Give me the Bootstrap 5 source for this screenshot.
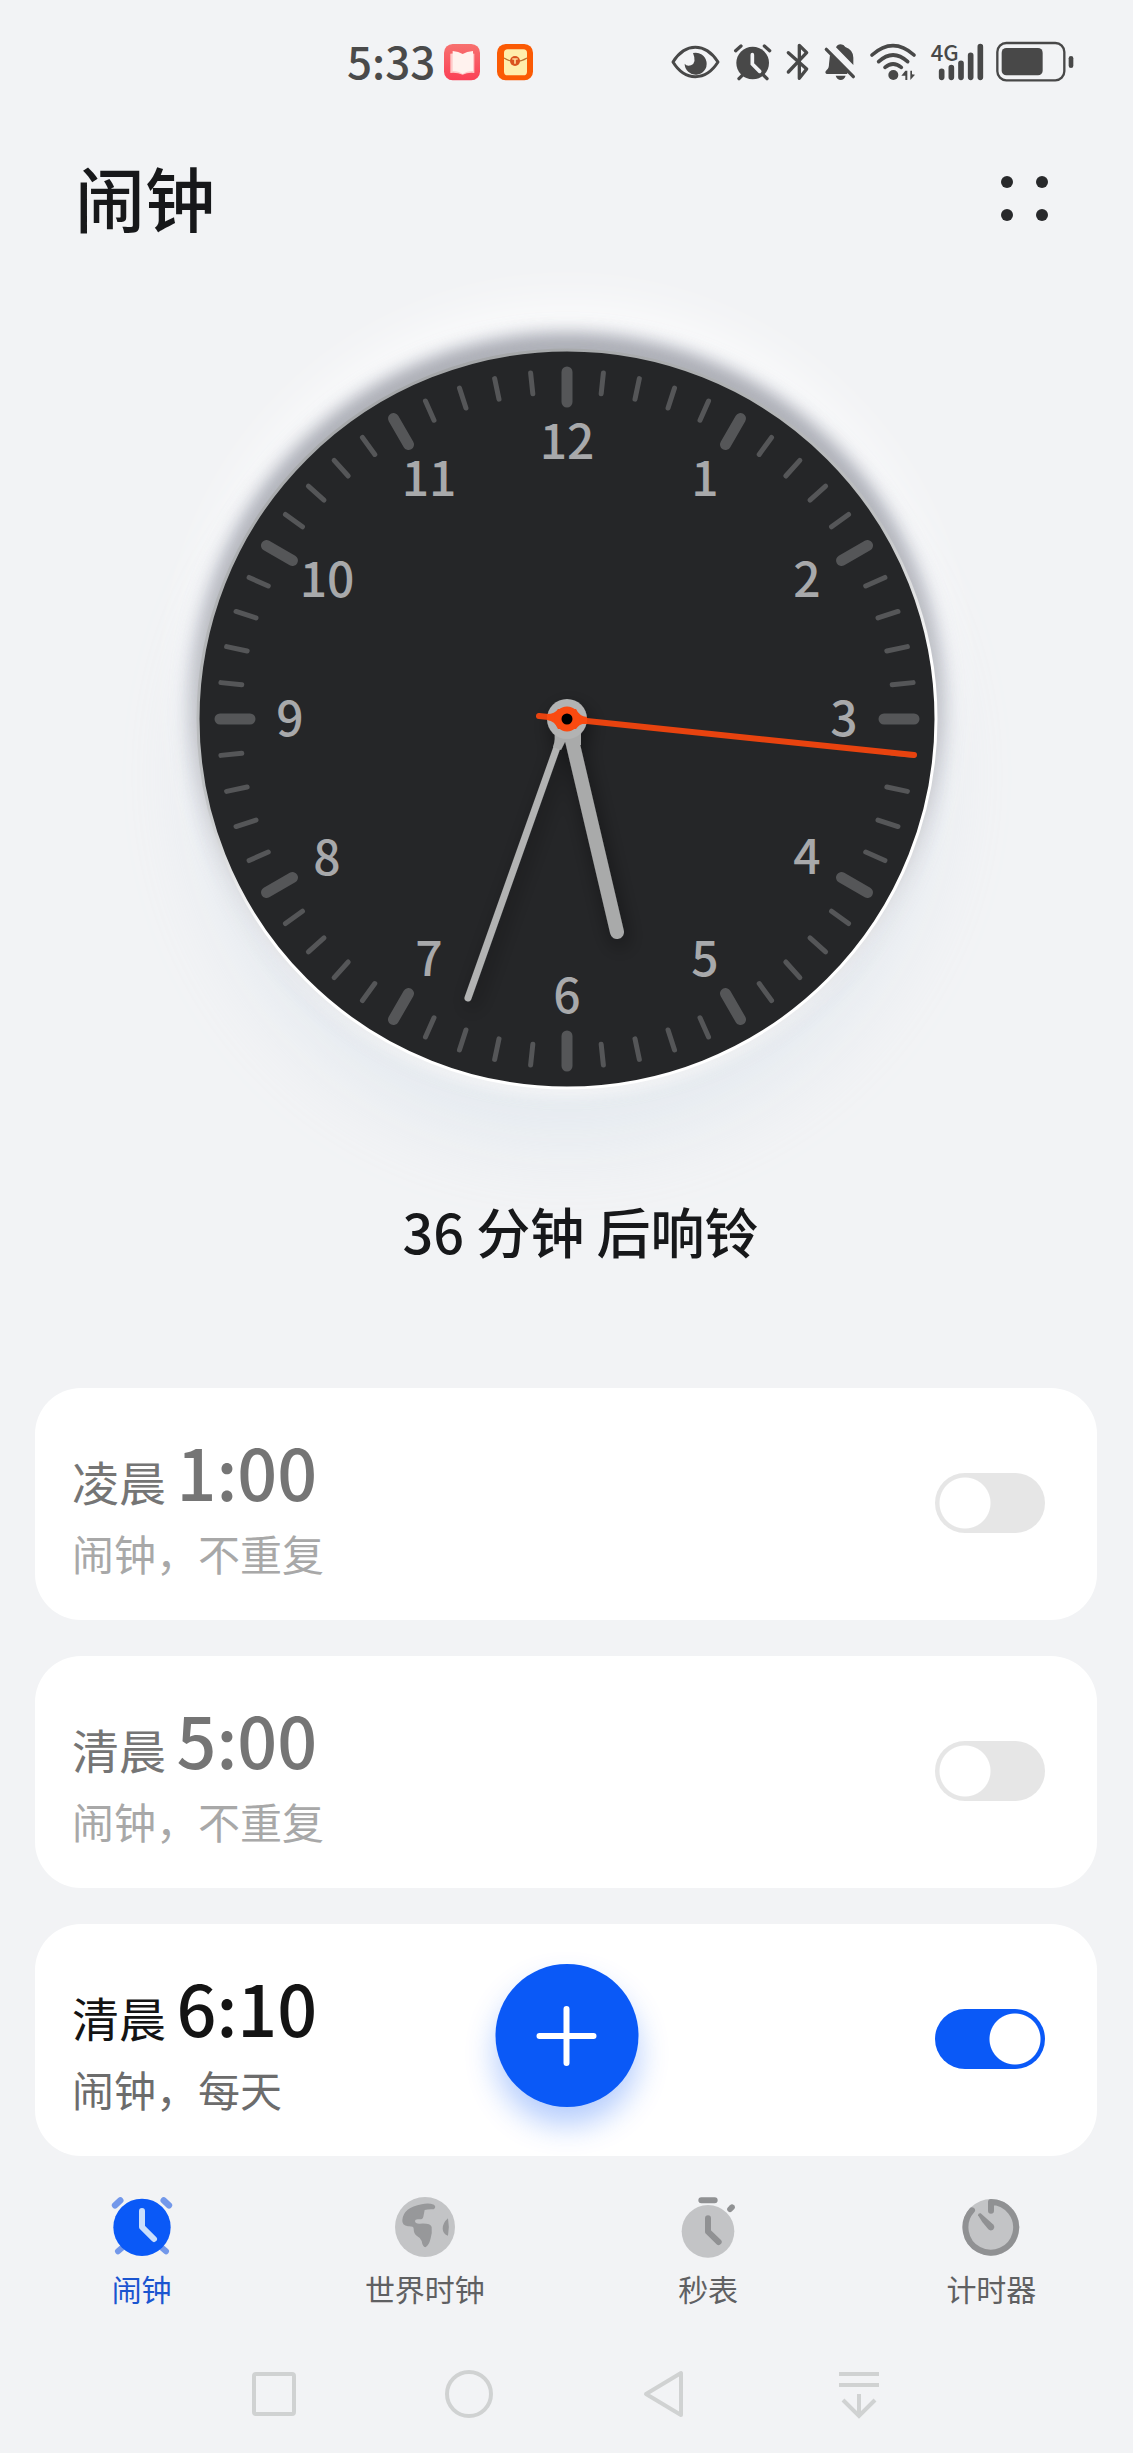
<!DOCTYPE html>
<html lang="zh-CN">
<head>
<meta charset="utf-8">
<meta name="viewport" content="width=device-width, initial-scale=1">
<title>闹钟</title>
<link href="https://cdn.jsdelivr.net/npm/bootstrap@5.3.0/dist/css/bootstrap.min.css" rel="stylesheet">
<style>
  :root { --accent: #0a59f7; --page: #f2f3f5; }
  body { background: var(--page); color: #17181a; font-family: "Noto Sans CJK SC", sans-serif; }
  svg { display: block; flex: none; overflow: visible; }
  .status-bar { padding: 42px 58px 0 347px; height: 82px; color: #484848; }
  .status-time { width: 88px; margin-bottom: 4px; font-size: 44px; line-height: 36px; font-weight: 500; color: #4a4a4a; }
  .gap-start { margin-left: 12px; }
  .page-head { margin-top: 75px; padding: 0 82px 0 75px; }
  .page-title { font-size: 70px; line-height: 80px; font-weight: 500; }
  .dial { width: 734px; height: 734px; margin-top: 115px; border-radius: 50%;
    box-shadow: 0 -12px 16px 6px rgba(92, 94, 104, .4), 0 6px 16px 4px #fff,
      0 -8px 18px 14px rgba(150, 156, 180, .3),
      0 -40px 60px rgba(255, 255, 255, .95), 0 56px 76px rgba(200, 216, 230, .3); }
  .dial-numbers { font-size: 48px; fill: #a8a9ab; text-anchor: middle; font-weight: 500; }
  .next-ring { margin-top: 115px; padding-left: 28px; font-size: 54px; line-height: 60px; font-weight: 500; }
  .alarm-list { margin-top: 127px; padding: 0 36px 0 35px; gap: 36px; }
  .alarm-card { height: 232px; border: 0; border-radius: 46px; padding: 43px 52px 0 37px; --bs-card-bg: #fff; }
  .alarm-time { font-size: 70px; line-height: 80px; font-weight: 500; color: #141414; }
  .alarm-time span { font-size: 47px; font-weight: 400; white-space: pre; }
  .alarm-note { margin-top: 7px; font-size: 42px; line-height: 50px; color: #6c6c6c; font-weight: 400; }
  .alarm-off .alarm-time { color: #757575; }
  .alarm-off .alarm-note { color: #a8a8a8; }
  .form-switch.alarm-switch { padding: 0; margin: 42px 0 0; min-height: 60px; }
  .form-switch .form-check-input.alarm-toggle { float: none; display: block; width: 110px; height: 60px; margin: 0; border: 0; border-radius: 30px;
    background-color: #e6e6e6; background-size: 60px 60px; background-position: left center;
    background-image: radial-gradient(circle, #fff 25px, transparent 26px); }
  .form-switch .form-check-input.alarm-toggle:checked { background-color: var(--accent); background-position: right center; }
  .add-btn { width: 143px; height: 143px; bottom: 49px; background: var(--accent); box-shadow: 0 18px 30px rgba(10, 89, 247, .3); }
  .add-btn:hover { background: var(--accent); }
  .tabs { margin-top: 41px; }
  .tabs .nav-link { padding: 0; color: #5f6062; font-size: 30px; line-height: 36px; gap: 13px; }
  .tabs .nav-link.active { color: #1b55d0; }
  .system-keys { margin: 63px auto 34px; width: 57%; }
  .system-keys button { width: 60px; height: 50px; }
</style>
<script src="https://cdn.jsdelivr.net/npm/bootstrap@5.3.0/dist/js/bootstrap.bundle.min.js"></script>
</head>
<body>
<header class="status-bar d-flex align-items-center">
  <span class="status-time">5:33</span>
  <svg class="ms-2" width="38" height="40" viewBox="372 68 114 120">
    <defs><linearGradient id="book" x2="0" y2="1"><stop stop-color="#f7716f"/><stop offset="1" stop-color="#fb4056"/></linearGradient></defs>
    <rect x="375" y="74" width="108" height="109" rx="26" fill="url(#book)"/>
    <path d="M394 103q20-1 37 5q17-6 35-5v58q-20-2-35 5q-17-7-37-5z" fill="#ffc9c9"/>
    <path d="M401 95q18 1 30 9q12-8 31-9v60q-19 0-31 9q-12-9-30-9z" fill="#fff2ee"/>
  </svg>
  <svg class="ms-3" width="36" height="40" viewBox="531 68 108 120">
    <rect x="531" y="74" width="108" height="109" rx="26" fill="#fb5a04"/>
    <rect x="552" y="90" width="69" height="78" rx="11" fill="#ffedac"/>
    <path d="M552 116q34 22 69 0" fill="none" stroke="#b87032" stroke-width="4"/>
    <circle cx="585" cy="125" r="15" fill="#d9531e"/><path d="M577 119h16M585 119v14" stroke="#ffd99a" stroke-width="5"/>
  </svg>
  <div class="d-flex align-items-center ms-auto">
    <svg width="54" height="40" viewBox="60 66 162 120" fill="currentColor">
      <path d="M66 126Q94 82 133 82T201 126Q173 170 133 170T66 126z" fill="none" stroke="currentColor" stroke-width="9" stroke-linejoin="round"/>
      <path d="M126 99a33 33 0 1 1-25 32q6 9 19 5q18-8 6-37z"/>
    </svg>
    <svg class="ms-2" width="40" height="40" viewBox="248 66 120 120" fill="none" stroke="currentColor" stroke-width="10" stroke-linecap="round">
      <circle cx="307" cy="129" r="49" fill="currentColor" stroke="none"/>
      <path d="M256 92l16-14M342 78l16 14M266 176l12-12M350 176l-12-12"/>
      <path d="M306 104v28l22 22" stroke="#f2f3f5" stroke-width="11"/>
    </svg>
    <svg class="gap-start" width="26" height="40" viewBox="404 66 78 120" fill="none" stroke="currentColor" stroke-width="10" stroke-linejoin="round" stroke-linecap="round">
      <path d="M414 98l55 49l-22 28V76l22 22l-55 58"/>
    </svg>
    <svg class="gap-start" width="34" height="40" viewBox="516 66 102 120" fill="currentColor">
      <path d="M555 82q4-9 14-9t14 8q24 9 24 32v22zM537 104l51 48q5 5 0 10H527q-8-4 0-12q7-4 7-18zM554 167h30q-5 13-15 13t-15-13z"/>
      <path d="M526 88l81 82" stroke="currentColor" stroke-width="10" stroke-linecap="round"/>
    </svg>
    <svg class="gap-start" width="48" height="40" viewBox="654 66 144 120" fill="none" stroke="currentColor" stroke-width="11" stroke-linecap="round">
      <path d="M663 105q63-56 126 0M683 125q43-40 87 0M702 142q24-20 49 0"/>
      <circle cx="727" cy="165" r="15" fill="currentColor" stroke="none"/>
      <path d="M763 152v28h6v-28zM751 167l12-15v15zM778 152v28l14-16-9-1v-11z" fill="currentColor" stroke="none"/>
    </svg>
    <svg class="gap-start" width="58" height="40" viewBox="832 66 174 120" fill="none" stroke="currentColor" stroke-width="17" stroke-linecap="round">
      <path d="M870 154v18M899 143v29M928 130v42M957 106v66M986 80v92"/>
      <text x="837" y="124" font-size="66" font-weight="500" fill="currentColor" stroke="none">4G</text>
    </svg>
    <svg class="ms-2" width="80" height="40" viewBox="1036 66 240 120">
      <rect x="1043" y="69" width="201" height="112" rx="27" fill="none" stroke="currentColor" stroke-width="7"/>
      <rect x="1056" y="84" width="123" height="82" rx="14" fill="currentColor"/>
      <rect x="1257" y="108" width="14" height="36" rx="7" fill="currentColor"/>
    </svg>
  </div>
</header>

<main>
  <div class="page-head d-flex justify-content-between align-items-center">
    <h1 class="page-title m-0">闹钟</h1>
    <button class="btn border-0 p-0" type="button" aria-label="更多">
      <svg width="54" height="54" fill="#28292b"><circle cx="10" cy="12" r="6"/><circle cx="45" cy="12" r="6"/><circle cx="10" cy="45" r="6"/><circle cx="45" cy="45" r="6"/></svg>
    </button>
  </div>

  <div class="dial mx-auto">
    <svg width="100%" height="100%" viewBox="-367 -367 734 734">
      <defs>
        <linearGradient id="rim" x1=".3" y1="0" x2=".7" y2="1"><stop stop-color="#a3a5a7"/><stop offset=".42" stop-color="#bfc1c3"/><stop offset=".6" stop-color="#fff"/><stop offset="1" stop-color="#fff"/></linearGradient>
        <filter id="soft" x="-100%" y="-50%" width="300%" height="200%"><feDropShadow dx="3" dy="8" stdDeviation="10" flood-opacity=".45"/></filter>
      </defs>
      <circle r="369" fill="#252628" stroke="url(#rim)" stroke-width="3"/>
      <g id="ticks" stroke="#555658" stroke-linecap="round"></g>
      <g id="numbers" class="dial-numbers"></g>
      <g filter="url(#soft)" stroke-linecap="round">
        <path d="M0 0L-99 279" stroke="#b2b3b3" stroke-width="7"/>
        <path d="M0 0L50 213" stroke="#a9aaaa" stroke-width="14"/>
        <path d="M-13 12Q-11 20-14 28L-6 31L-2 23L4 26L14 26L14 10z" fill="#a9aaaa"/>
        <circle r="20" fill="#b2b3b3"/>
      </g>
      <path d="M-28-3L347 36" stroke="#e8430f" stroke-width="6" stroke-linecap="round"/>
      <path d="M-20-5Q-12-5-9-10L9-10Q12-3 20-2L20 5Q13 4 9 10L-9 10Q-12 2-20 1z" fill="#fa4a10"/>
      <circle r="9" fill="#000" stroke="#fa4a10" stroke-width="7"/>
    </svg>
  </div>
  <p class="next-ring text-center mb-0">36 分钟 后响铃</p>

  <section class="alarm-list d-flex flex-column position-relative" aria-label="闹钟列表">
    <article class="card alarm-card alarm-off flex-row justify-content-between">
      <label for="alarm1"><div class="alarm-time"><span>凌晨 </span>1:00</div><div class="alarm-note">闹钟，不重复</div></label>
      <div class="form-check form-switch alarm-switch"><input class="form-check-input alarm-toggle" type="checkbox" role="switch" id="alarm1"></div>
    </article>
    <article class="card alarm-card alarm-off flex-row justify-content-between">
      <label for="alarm2"><div class="alarm-time"><span>清晨 </span>5:00</div><div class="alarm-note">闹钟，不重复</div></label>
      <div class="form-check form-switch alarm-switch"><input class="form-check-input alarm-toggle" type="checkbox" role="switch" id="alarm2"></div>
    </article>
    <article class="card alarm-card flex-row justify-content-between">
      <label for="alarm3"><div class="alarm-time"><span>清晨 </span>6:10</div><div class="alarm-note">闹钟，每天</div></label>
      <div class="form-check form-switch alarm-switch"><input class="form-check-input alarm-toggle" type="checkbox" role="switch" id="alarm3" checked></div>
    </article>
    <button class="add-btn btn border-0 rounded-circle p-0 position-absolute start-50 translate-middle-x d-flex align-items-center justify-content-center" type="button" aria-label="添加闹钟">
      <svg width="60" height="60" stroke="#fff" stroke-width="6" stroke-linecap="round"><path d="M3 30H57M30 3V57"/></svg>
    </button>
  </section>
</main>

<nav class="tabs nav nav-justified" aria-label="主导航">
  <a class="nav-link active d-flex flex-column align-items-center" href="#" aria-current="page">
    <svg width="60" height="60" viewBox="153 80 180 180" stroke-linecap="round" fill="none">
      <path d="M162 105l16-15M308 90l16 15" stroke="#7398ea" stroke-width="19"/><path d="M171 243l14-12M301 231l14 12" stroke="#7398ea" stroke-width="18"/>
      <circle cx="243" cy="171" r="86" fill="#0a59f7"/><path d="M243 122v48l36 36" stroke="#c9defc" stroke-width="18" stroke-linejoin="round"/>
    </svg>闹钟</a>
  <a class="nav-link d-flex flex-column align-items-center" href="#">
    <svg width="60" height="60" viewBox="1002 80 180 180">
      <circle cx="1092" cy="170" r="90" fill="#c3c4c6"/>
      <path d="M1082 102q20-5 37 1q8 7-1 14q-17-1-27 2l-4 20q-2 9-12 8q-13-2-13 6q1 8 15 7q32-2 35 10q2 16-3 34q-5 22-16 27q-8-1-11-19q-4-10-14-15q-10-6-10-22q0-8-17-7q-19-3-17-19q3-37 58-47zM1161 144q-16 14-16 31q1 17 16 21q5-26 0-52z" fill="#97989a"/>
    </svg>世界时钟</a>
  <a class="nav-link d-flex flex-column align-items-center" href="#">
    <svg width="60" height="60" viewBox="171 80 180 180" stroke-linecap="round" fill="none" stroke="#909193">
      <circle cx="261" cy="183" r="79" fill="#c3c4c6" stroke="none"/><path d="M241 90h40M261 144v40l32 31" stroke-width="18" stroke-linejoin="round"/><path d="M327 117l6-6" stroke-width="17"/>
    </svg>秒表</a>
  <a class="nav-link d-flex flex-column align-items-center" href="#">
    <svg width="60" height="60" viewBox="1020 80 180 180" stroke-linecap="round" fill="none" stroke="#909193" stroke-width="18">
      <circle cx="1110" cy="171" r="85" fill="#c3c4c6" stroke="none"/><path d="M1110 121V95A76 76 0 1 1 1053 120" stroke-linejoin="round"/><path d="M1071 135q0-7 8-6l37 33q8 9 0 16q-8 5-14-1q-20-21-31-42z" fill="#909193" stroke="none"/>
    </svg>计时器</a>
</nav>

<footer class="system-keys d-flex justify-content-between">
  <button class="btn border-0 p-0 d-flex align-items-center justify-content-center" type="button" aria-label="最近任务"><svg width="44" height="44" fill="none" stroke="#d0d2d2" stroke-width="4"><rect x="2" y="2" width="40" height="40" rx="2"/></svg></button>
  <button class="btn border-0 p-0 d-flex align-items-center justify-content-center" type="button" aria-label="主屏幕"><svg width="48" height="48" fill="none" stroke="#d0d2d2" stroke-width="4"><circle cx="24" cy="24" r="22"/></svg></button>
  <button class="btn border-0 p-0 d-flex align-items-center justify-content-center" type="button" aria-label="返回"><svg width="42" height="48" fill="none" stroke="#d0d2d2" stroke-width="4" stroke-linejoin="round"><path d="M38 3V45L3 24z"/></svg></button>
  <button class="btn border-0 p-0 d-flex align-items-center justify-content-center" type="button" aria-label="通知栏"><svg width="42" height="48" fill="none" stroke="#d0d2d2" stroke-width="4"><path d="M1 4H41M1 15H41M21 24V45M5 30L21 46L37 30"/></svg></button>
</footer>

<script>
  // Sixty minute marks and the twelve hour numbers of the dial
  const ns = "http://www.w3.org/2000/svg";
  const ticks = document.getElementById("ticks"), numbers = document.getElementById("numbers");
  for (let i = 1; i <= 60; i++) {
    const major = i % 5 === 0, tick = document.createElementNS(ns, "path");
    tick.setAttribute("d", major ? "M0-347V-317" : "M0-348V-327");
    tick.setAttribute("stroke-width", major ? 11 : 5);
    tick.setAttribute("transform", "rotate(" + i * 6 + ")");
    ticks.append(tick);
    if (major) {
      const n = document.createElementNS(ns, "text"), a = i * Math.PI / 30;
      n.textContent = i / 5;
      n.setAttribute("x", Math.round(277 * Math.sin(a)));
      n.setAttribute("y", Math.round(-277 * Math.cos(a)) + 17);
      numbers.append(n);
    }
  }
</script>
</body>
</html>
